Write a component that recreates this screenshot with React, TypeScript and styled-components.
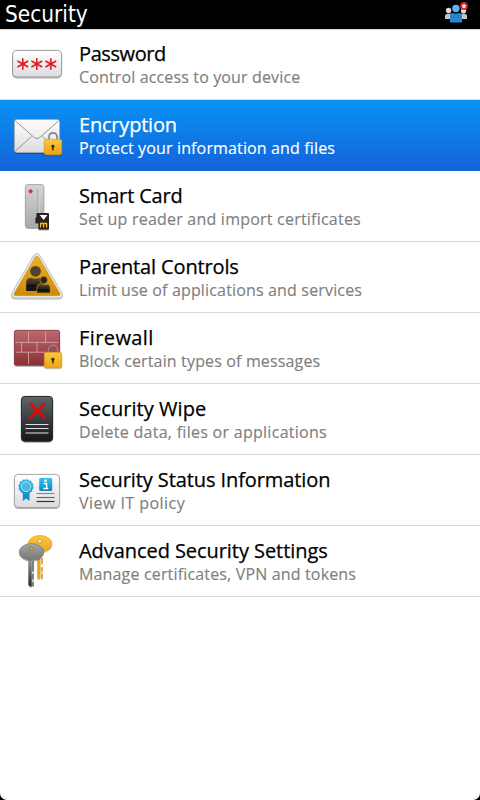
import React from "react";
import styled, { createGlobalStyle } from "styled-components";

const GlobalStyle = createGlobalStyle`
  * { box-sizing: border-box; }
  html, body { margin: 0; background: #000; }
`;

const Screen = styled.main`
  width: 480px;
  height: 800px;
  display: flex;
  flex-direction: column;
  background: #000;
  overflow: hidden;
`;

const Header = styled.header`
  height: 29px;
  flex: none;
  display: flex;
  align-items: center;
  justify-content: space-between;
  padding: 0 11px 0 5px;
  background: #000;
`;

const Heading = styled.h1`
  margin: 0;
  padding-bottom: 2px;
  font: 400 22.4px/26px "DejaVu Sans Condensed", "DejaVu Sans", sans-serif;
  font-stretch: condensed;
  color: #fff;
`;

const Panel = styled.section`
  flex: 1;
  background: #fff;
  border-radius: 0 0 7px 7px;
  box-shadow: inset 0 1px 0 #d9d5d9;
`;

const List = styled.ul`
  list-style: none;
  margin: 0;
  padding: 0;
`;

const Row = styled.li<{ $selected?: boolean }>`
  height: 71px;
  display: flex;
  border-bottom: ${(p) => (p.$selected ? "0" : "1px solid #d8d8d8")};
  background: ${(p) => (p.$selected ? "linear-gradient(#0892f3, #1463da)" : "transparent")};
  color: ${(p) => (p.$selected ? "#fff" : "#000")};
`;

const IconArt = styled.svg`
  width: 79px;
  height: 71px;
  flex: none;
  display: block;
`;

const Labels = styled.div`
  display: flex;
  flex-direction: column;
  align-items: flex-start;
  padding-top: 11px;
  white-space: nowrap;
`;

const Title = styled.span<{ $track: number }>`
  font: 400 20px/27px "Open Sans", "Noto Sans", sans-serif;
  letter-spacing: ${(p) => p.$track}px;
  -webkit-text-stroke: 0.25px currentColor;
`;

const Detail = styled.span<{ $track: number; $selected?: boolean }>`
  font: 400 16px/20px "Open Sans", "Noto Sans", sans-serif;
  letter-spacing: ${(p) => p.$track}px;
  color: ${(p) => (p.$selected ? "#fff" : "#808080")};
  -webkit-text-stroke: 0.15px currentColor;
`;

const Gradients = () => (
  <defs>
    <linearGradient id="silver" x2="0" y2="1"><stop stopColor="#fff" /><stop offset="1" stopColor="#dcdcdf" /></linearGradient>
    <linearGradient id="steel" x2="0" y2="1"><stop stopColor="#d4d4d4" /><stop offset="1" stopColor="#a9a9a9" /></linearGradient>
    <linearGradient id="gold" x2="0" y2="1"><stop stopColor="#fdc83c" /><stop offset="1" stopColor="#eda31b" /></linearGradient>
    <linearGradient id="amber" x2="0" y2="1"><stop stopColor="#efb02e" /><stop offset="1" stopColor="#cf8a00" /></linearGradient>
    <linearGradient id="brick" x2="0" y2="1"><stop stopColor="#bd696e" /><stop offset="1" stopColor="#8b2f36" /></linearGradient>
    <linearGradient id="slate" x2="0" y2="1"><stop stopColor="#5e6669" /><stop offset="1" stopColor="#161718" /></linearGradient>
    <linearGradient id="sky" x2="0" y2="1"><stop stopColor="#35c3f5" /><stop offset="1" stopColor="#0b84bd" /></linearGradient>
    <linearGradient id="iron" x2="0" y2="1"><stop stopColor="#a5a5a5" /><stop offset="1" stopColor="#777" /></linearGradient>
    <linearGradient id="shank" x2="0" y2="1"><stop stopColor="#999" /><stop offset="1" stopColor="#2a2a2a" /></linearGradient>
    <linearGradient id="night" x2="0" y2="1"><stop stopColor="#5a4c35" /><stop offset=".5" stopColor="#2d2720" /><stop offset=".52" stopColor="#111" /><stop offset="1" stopColor="#1a1712" /></linearGradient>
    <filter id="soft" x="-20%" y="-20%" width="140%" height="150%"><feDropShadow dx="0" dy="1" stdDeviation=".7" floodOpacity=".35" /></filter>
  </defs>
);

const Padlock = ({ shackle = "#77777a" }: { shackle?: string }) => (
  <g>
    <path d="M48.9 39.500v-2.500a4.100 4.100 0 0 1 8.200 0v2.500" fill="none" stroke={shackle} strokeWidth="1.700" />
    <path d="M48.300 39v-2.200a4.700 4.700 0 0 1 9.400 0v2.200" fill="none" stroke="#b9b9bb" strokeWidth=".6" />
    <rect x="44.300" y="39.300" width="17.400" height="15.400" rx="2" fill="url(#gold)" stroke="#d8951a" strokeWidth=".6" filter="url(#soft)" />
    <path d="M52.900 44.800a1.600 1.600 0 0 1 .8 3v2.500h-1.600v-2.500a1.600 1.600 0 0 1 .8-3z" fill="#3a2a0c" />
  </g>
);

const PasswordIcon = () => (
  <>
    <rect x="12.600" y="21.400" width="49" height="26.600" rx="4.200" fill="url(#silver)" stroke="#999" filter="url(#soft)" />
    {[22.8, 36.8, 50.8].map((x) => (
      <path key={x} d={`M${x} 29.200v11.600M${x - 5.4} 32l10.800 6M${x - 5.4} 38l10.800-6`} stroke="#de1b20" strokeWidth="1.600" />
    ))}
  </>
);

const MailIcon = () => (
  <>
    <rect x="14.400" y="19.400" width="45.200" height="33" rx="2.600" fill="url(#silver)" stroke="#a5a5a8" strokeWidth=".8" filter="url(#soft)" />
    <path d="M15.500 21 32.500 36q4.500 5 9 0L58.500 21M15.500 51 31.500 36.500M58.500 51 42.500 36.500" fill="none" stroke="#929295" strokeWidth="1" />
    <Padlock />
  </>
);

const CardIcon = () => (
  <>
    <rect x="25.400" y="13.500" width="18.400" height="43" rx="2.400" fill="url(#steel)" stroke="#a0a0a0" strokeWidth=".8" filter="url(#soft)" />
    <path d="M38 18v26" stroke="#999" /><path d="M39 18v26" stroke="#dedede" strokeWidth=".7" />
    <circle cx="30.600" cy="20.300" r="1.900" fill="#d52b2b" stroke="#9c7777" strokeWidth=".5" />
    <path d="M36.500 42H48q1 0 1 1v14.500q0 1-1 1H38.500v-6.500H35.500v-5l1-1z" fill="#292321" filter="url(#soft)" />
    <path d="M39.700 44h7.800l-3.900 5z" fill="#fff" />
    <path d="M40.600 56.500v-4h6v4M43.600 56.500v-4" fill="none" stroke="#ffbd0a" strokeWidth="1.300" />
  </>
);

const ParentIcon = () => (
  <>
    <path d="M33.600 13.500q3.200-4 6.400 0L61.800 50.500q2 5.500-3.300 5.500H15.500q-5.500 0-3.300-5.500z" fill="#e9e9ea" stroke="#b5b5b5" strokeWidth=".8" filter="url(#soft)" />
    <path d="M35.200 15.200q1.700-2 3.400 0L59.800 51.400q.8 2.200-1.500 2.200H15.700q-2.200 0-1.500-2.200z" fill="url(#amber)" stroke="#b87c08" strokeWidth=".5" />
    <circle cx="35.500" cy="29.300" r="5.400" fill="#51432e" />
    <path d="M26.200 49V40.500q0-4.800 5-4.800 4.300 2.300 8.600 0 4.700 0 4.700 5V49z" fill="url(#night)" />
    <circle cx="43.700" cy="38" r="3.800" fill="#2b251d" stroke="#d69a1a" strokeWidth=".7" />
    <path d="M36.800 51v-5.500q0-3.500 3.600-3.500 3.300 1.700 6.600 0 3.200 0 3.200 3.500V51z" fill="url(#night)" stroke="#d69a1a" strokeWidth=".6" />
  </>
);

const WallIcon = () => (
  <>
    <rect x="14.400" y="17.300" width="45.200" height="35" rx="2" fill="url(#brick)" stroke="#7c3238" strokeWidth=".8" filter="url(#soft)" />
    <path d="M16 29.400h42M16 39.200h29M28.500 18.500v10.500M45.600 18.500v10.500M21.600 29.500v9.500M37 29.500v9.500M28.500 39.500V51" stroke="#d9a0a3" strokeWidth=".9" fill="none" />
    <Padlock shackle="#86585c" />
  </>
);

const WipeIcon = () => (
  <>
    <rect x="21.400" y="12.400" width="31.200" height="44.800" rx="3.400" fill="url(#slate)" stroke="#222526" filter="url(#soft)" />
    <path d="M29.800 19.500 44.500 34M44.500 19.500 29.800 34" stroke="#e80608" strokeWidth="2.900" />
    <path d="M25.500 40.500h23M25.500 44.500h23M25.500 49h23" stroke="#e0e0e0" strokeWidth="1.200" />
  </>
);

const StatusIcon = () => (
  <>
    <rect x="14.400" y="19.400" width="45.200" height="33" rx="3.600" fill="url(#silver)" stroke="#a5a5a8" filter="url(#soft)" />
    <path d="M22.800 37h6.700v9l-3.300-2.500-3.400 2.500z" fill="#128dc5" />
    <circle cx="26" cy="31.800" r="7" fill="url(#sky)" stroke="#2ea8dc" strokeWidth="1.200" strokeDasharray="2.200 1.460" />
    <circle cx="26" cy="31.800" r="4.900" fill="#49b9e3" stroke="#bfe6f4" strokeWidth=".9" />
    <rect x="39.200" y="23" width="13" height="13" rx="1.300" fill="url(#sky)" />
    <circle cx="45.500" cy="25.700" r="1.300" fill="#fff" />
    <path d="M43.500 28.400h3.100v4.800M43.300 33.400h5" fill="none" stroke="#fff" strokeWidth="1.500" />
    <path d="M36.500 38.500h18" stroke="#888" strokeWidth="1.100" /><path d="M36.500 42.500h18" stroke="#666" strokeWidth="1.100" /><path d="M36.500 46.500h18" stroke="#333" strokeWidth="1.200" />
  </>
);

const KeysIcon = () => (
  <>
    <g filter="url(#soft)">
      <path d="M37.300 25h3.100v26.800l-1.500 1.500-1.600-1.500z" fill="#eaa51c" />
      <path d="M42 32v5.500M42 41v4.500M42 47.500v5" stroke="#e3a32b" strokeWidth="1.700" />
      <ellipse cx="40" cy="17.700" rx="11.800" ry="8.300" fill="url(#gold)" stroke="#d99b22" strokeWidth=".6" />
      <circle cx="39.800" cy="15" r="1.900" fill="#fff4d4" stroke="#b98b31" strokeWidth=".7" />
    </g>
    <g filter="url(#soft)">
      <path d="M28.400 32h3.300v28.500h-1.500l-1.800-1.800z" fill="url(#shank)" />
      <path d="M33 35v10.500M33 47.500v6M33 55.500v4.500" stroke="#666" strokeWidth="1.500" />
      <ellipse cx="31.500" cy="26" rx="12.200" ry="8.500" fill="url(#iron)" stroke="#777" strokeWidth=".6" />
      <path d="m31.500 20.700 2.300 1.500-.5 2.100h-3.600l-.5-2.100z" fill="#d9a22a" stroke="#77653b" strokeWidth=".5" />
    </g>
  </>
);

const ContactsIcon = styled.svg`
  width: 26px;
  height: 24px;
  display: block;
  margin-bottom: 4px;
`;

type Item = {
  title: string;
  detail: string;
  art: React.FC;
  titleTrack: number;
  detailTrack: number;
  selected?: boolean;
};

const items: Item[] = [
  { title: "Password", detail: "Control access to your device", art: PasswordIcon, titleTrack: -0.4, detailTrack: 0.14 },
  { title: "Encryption", detail: "Protect your information and files", art: MailIcon, titleTrack: -0.2, detailTrack: 0.14, selected: true },
  { title: "Smart Card", detail: "Set up reader and import certificates", art: CardIcon, titleTrack: -0.16, detailTrack: 0.22 },
  { title: "Parental Controls", detail: "Limit use of applications and services", art: ParentIcon, titleTrack: -0.14, detailTrack: 0.16 },
  { title: "Firewall", detail: "Block certain types of messages", art: WallIcon, titleTrack: 0.4, detailTrack: 0.15 },
  { title: "Security Wipe", detail: "Delete data, files or applications", art: WipeIcon, titleTrack: 0.05, detailTrack: 0.28 },
  { title: "Security Status Information", detail: "View IT policy", art: StatusIcon, titleTrack: -0.09, detailTrack: 0.46 },
  { title: "Advanced Security Settings", detail: "Manage certificates, VPN and tokens", art: KeysIcon, titleTrack: -0.06, detailTrack: 0.16 },
];

export default function App() {
  return (
    <Screen>
      <GlobalStyle />
      <Header>
        <Heading>Security</Heading>
        <ContactsIcon viewBox="443 0 26 24">
          <Gradients />
          <circle cx="448.600" cy="9.500" r="2.700" fill="#ddd" />
          <path d="M445 18v-3q0-2 2.500-2.200h4V18zM460 12.800h4.500q2.500.2 2.500 2.200v3h-7z" fill="#c4c4c4" />
          <circle cx="463.500" cy="9.800" r="2.600" fill="#ddd" />
          <circle cx="455.900" cy="7.500" r="3.700" fill="#5cb5ec" />
          <path d="M450 21.500v-7q0-2.500 3-2.500 3 1.500 6 0 3 0 3 2.500v7z" fill="#2585d0" />
          <circle cx="464" cy="4.900" r="3.900" fill="#cf2029" />
          <path d="m464 2.300.8 1.700 1.800.3-1.300 1.300.3 1.900-1.600-.9-1.600.9.300-1.900-1.300-1.300 1.800-.3z" fill="#fff" />
        </ContactsIcon>
      </Header>
      <Panel>
        <List>
          {items.map(({ title, detail, art: Art, titleTrack, detailTrack, selected }) => (
            <Row key={title} $selected={selected}>
              <IconArt viewBox="0 0 79 71"><Art /></IconArt>
              <Labels>
                <Title $track={titleTrack}>{title}</Title>
                <Detail $track={detailTrack} $selected={selected}>{detail}</Detail>
              </Labels>
            </Row>
          ))}
        </List>
      </Panel>
    </Screen>
  );
}
